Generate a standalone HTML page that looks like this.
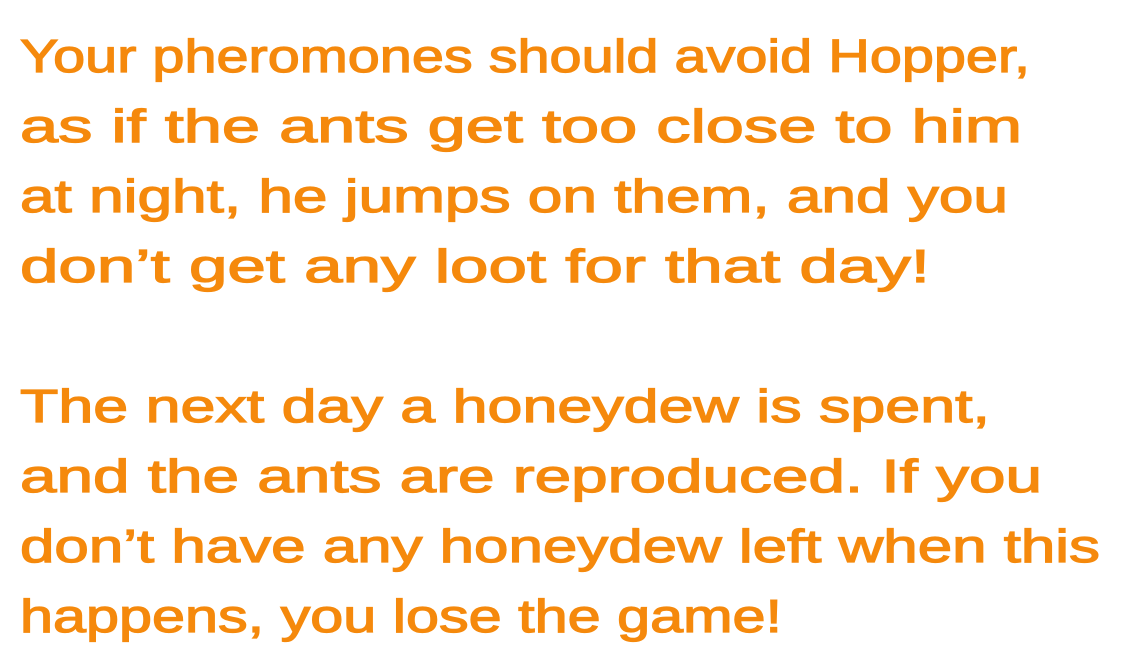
<!DOCTYPE html>
<html><head><meta charset="utf-8"><style>
html,body{margin:0;padding:0;background:#fff;width:1121px;height:670px;overflow:hidden}
text{font-family:"Liberation Sans",sans-serif;font-size:46px;fill:#f5890c;stroke:#f5890c;stroke-width:1.2px}
</style></head><body>
<svg width="1121" height="670" xmlns="http://www.w3.org/2000/svg">
<text x="20" y="72" textLength="1010" lengthAdjust="spacingAndGlyphs">Your pheromones should avoid Hopper,</text>
<text x="20" y="142" textLength="1002" lengthAdjust="spacingAndGlyphs">as if the ants get too close to him</text>
<text x="20" y="212" textLength="988" lengthAdjust="spacingAndGlyphs">at night, he jumps on them, and you</text>
<text x="20" y="282" textLength="910" lengthAdjust="spacingAndGlyphs">don’t get any loot for that day!</text>
<text x="20" y="422" textLength="970" lengthAdjust="spacingAndGlyphs">The next day a honeydew is spent,</text>
<text x="20" y="492" textLength="1022" lengthAdjust="spacingAndGlyphs">and the ants are reproduced. If you</text>
<text x="20" y="562" textLength="1080" lengthAdjust="spacingAndGlyphs">don’t have any honeydew left when this</text>
<text x="20" y="632" textLength="762" lengthAdjust="spacingAndGlyphs">happens, you lose the game!</text>
</svg>
</body></html>
